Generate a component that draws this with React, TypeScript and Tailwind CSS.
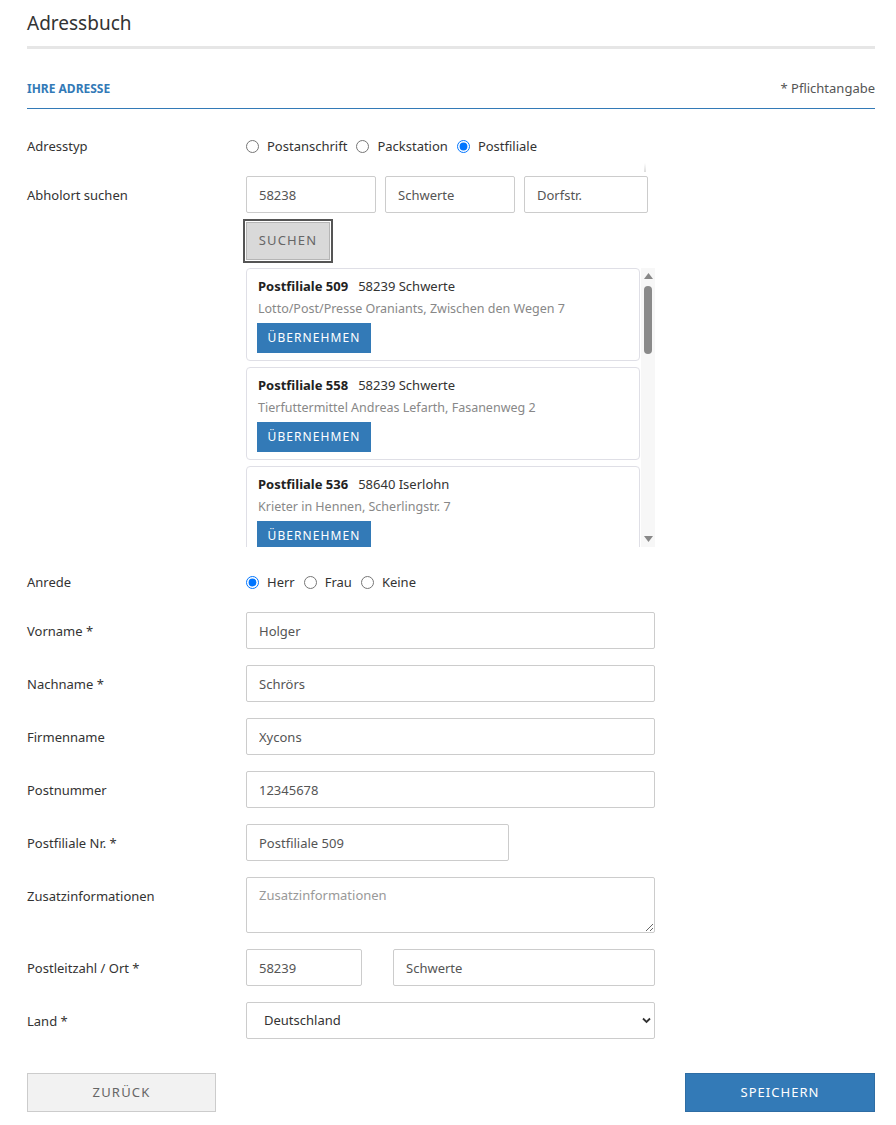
import React from "react";

const font = { fontFamily: '"Noto Sans", "Open Sans", Arial, sans-serif' };

type Filiale = { nr: string; ort: string; adresse: string };

const filialen: Filiale[] = [
  { nr: "Postfiliale 509", ort: "58239 Schwerte", adresse: "Lotto/Post/Presse Oraniants, Zwischen den Wegen 7" },
  { nr: "Postfiliale 558", ort: "58239 Schwerte", adresse: "Tierfuttermittel Andreas Lefarth, Fasanenweg 2" },
  { nr: "Postfiliale 536", ort: "58640 Iserlohn", adresse: "Krieter in Hennen, Scherlingstr. 7" },
];

function Label({ children }: { children: React.ReactNode }) {
  return <div className="w-[219px] shrink-0 pt-[10px] text-[13px] leading-[19px] text-[#333]">{children}</div>;
}

function TextInput({ value, className = "" }: { value: string; className?: string }) {
  return (
    <input
      type="text"
      defaultValue={value}
      className={`h-[37px] border border-[#ccc] rounded-[2px] px-[12px] text-[13px] text-[#555] bg-white outline-none ${className}`}
      style={font}
    />
  );
}

function Radio({ label, checked, name }: { label: string; checked?: boolean; name: string }) {
  return (
    <label className="flex items-center gap-[8px] mr-[9px]">
      <input type="radio" name={name} defaultChecked={checked} className="m-0 w-[13px] h-[13px]" />
      <span>{label}</span>
    </label>
  );
}

function FilialeCard({ f }: { f: Filiale }) {
  return (
    <div className="border border-[#dfdfe6] rounded-[4px] px-[11px] pt-[8px] pb-[7px] bg-white">
      <div className="text-[13px] leading-[19px] text-[#333]">
        <span className="font-bold text-[#222]">{f.nr}</span>
        <span className="ml-[10px]">{f.ort}</span>
      </div>
      <div className="mt-[3px] text-[12.5px] leading-[19px] text-[#888]">{f.adresse}</div>
      <button
        className="mt-[5px] h-[30px] w-[114px] bg-[#337ab7] text-white text-[12px] tracking-[0.09em] -ml-[1px]"
        style={font}
      >
        ÜBERNEHMEN
      </button>
    </div>
  );
}

export default function App() {
  return (
    <div className="bg-white min-h-[1125px] pl-[27px] pr-[21px] text-[13px] text-[#333]" style={font}>
      {/* Page title */}
      <div className="pt-[10px] pb-[10px] border-b-[3px] border-[#e6e6e6]">
        <h1 className="text-[19px] leading-[26px] text-[#333] font-normal">Adressbuch</h1>
      </div>

      {/* Section header */}
      <div className="mt-[30px] pb-[10px] border-b border-[#337ab7] flex items-center justify-between">
        <div className="text-[12px] font-bold text-[#337ab7] leading-[19px]">IHRE ADRESSE</div>
        <div className="text-[13px] text-[#555] leading-[19px]">* Pflichtangabe</div>
      </div>

      {/* Adresstyp */}
      <div className="mt-[28px] flex items-center">
        <div className="w-[219px] shrink-0 leading-[19px]">Adresstyp</div>
        <div className="flex items-center leading-[19px]">
          <Radio name="typ" label="Postanschrift" />
          <Radio name="typ" label="Packstation" />
          <Radio name="typ" label="Postfiliale" checked />
        </div>
      </div>

      {/* Abholort suchen */}
      <div className="mt-[20px] flex">
        <Label>Abholort suchen</Label>
        <div className="relative">
          <div className="absolute left-[398px] -top-[13px] w-[2px] h-[9px] bg-gradient-to-b from-white to-[#ddd]" />
          <div className="flex gap-[9px]">
            <TextInput value="58238" className="w-[130px]" />
            <TextInput value="Schwerte" className="w-[130px]" />
            <TextInput value="Dorfstr." className="w-[124px]" />
          </div>
          <button
            className="mt-[9px] ml-0 h-[38px] w-[84px] bg-[#d9d9d9] border border-[#b5b5b5] outline-2 outline-[#555] outline-offset-1 text-[13px] tracking-[0.09em] text-[#666]"
            style={font}
          >
            SUCHEN
          </button>

          {/* Result list with scrollbar */}
          <div className="mt-[8px] flex h-[279px] overflow-hidden">
            <div className="w-[394px] flex flex-col gap-[6px]">
              {filialen.map((f) => (
                <FilialeCard key={f.nr} f={f} />
              ))}
            </div>
            <div className="ml-[1px] w-[14px] bg-[#f7f7f7] relative">
              <svg className="absolute left-[3px] top-[5px]" width="9" height="6" viewBox="0 0 9 6">
                <path d="M0 6 L4.5 0 L9 6 Z" fill="#888" />
              </svg>
              <div className="absolute left-[3px] top-[18px] w-[8px] h-[68px] rounded-[4px] bg-[#8a8a8a]" />
              <svg className="absolute left-[3px] bottom-[5px]" width="9" height="6" viewBox="0 0 9 6">
                <path d="M0 0 L9 0 L4.5 6 Z" fill="#888" />
              </svg>
            </div>
          </div>
        </div>
      </div>

      {/* Anrede */}
      <div className="mt-[26px] flex items-center">
        <div className="w-[219px] shrink-0 leading-[19px]">Anrede</div>
        <div className="flex items-center leading-[19px]">
          <Radio name="anrede" label="Herr" checked />
          <Radio name="anrede" label="Frau" />
          <Radio name="anrede" label="Keine" />
        </div>
      </div>

      <div className="mt-[20px] flex flex-col gap-[16px]">
        <div className="flex">
          <Label>Vorname *</Label>
          <TextInput value="Holger" className="w-[409px]" />
        </div>
        <div className="flex">
          <Label>Nachname *</Label>
          <TextInput value="Schrörs" className="w-[409px]" />
        </div>
        <div className="flex">
          <Label>Firmenname</Label>
          <TextInput value="Xycons" className="w-[409px]" />
        </div>
        <div className="flex">
          <Label>Postnummer</Label>
          <TextInput value="12345678" className="w-[409px]" />
        </div>
        <div className="flex">
          <Label>Postfiliale Nr. *</Label>
          <TextInput value="Postfiliale 509" className="w-[263px]" />
        </div>
        <div className="flex">
          <Label>Zusatzinformationen</Label>
          <textarea
            placeholder="Zusatzinformationen"
            className="w-[409px] h-[56px] border border-[#ccc] rounded-[2px] px-[12px] pt-[8px] text-[13px] leading-[19px] text-[#555] placeholder:text-[#999] outline-none"
            style={font}
          />
        </div>
        <div className="flex">
          <Label>Postleitzahl / Ort *</Label>
          <div className="flex gap-[31px]">
            <TextInput value="58239" className="w-[116px]" />
            <TextInput value="Schwerte" className="w-[262px]" />
          </div>
        </div>
        <div className="flex">
          <Label>Land *</Label>
          <div className="relative w-[409px] h-[37px]">
            <select
              defaultValue="DE"
              className="appearance-none w-full h-full border border-[#ccc] rounded-[2px] pl-[17px] text-[13px] text-[#333] bg-white outline-none"
              style={font}
            >
              <option value="DE">Deutschland</option>
            </select>
            <svg
              className="absolute right-[4px] top-[15px] pointer-events-none"
              width="9"
              height="7"
              viewBox="0 0 9 7"
            >
              <path d="M1 1.5 L4.5 5 L8 1.5" fill="none" stroke="#333" strokeWidth="1.8" />
            </svg>
          </div>
        </div>
      </div>

      {/* Footer buttons */}
      <div className="mt-[34px] flex justify-between">
        <button
          className="w-[189px] h-[39px] bg-[#f2f2f2] border border-[#ccc] text-[13px] tracking-[0.09em] text-[#666]"
          style={font}
        >
          ZURÜCK
        </button>
        <button
          className="w-[190px] h-[39px] bg-[#337ab7] border border-[#2e6da4] text-[13px] tracking-[0.08em] text-white"
          style={font}
        >
          SPEICHERN
        </button>
      </div>
    </div>
  );
}
